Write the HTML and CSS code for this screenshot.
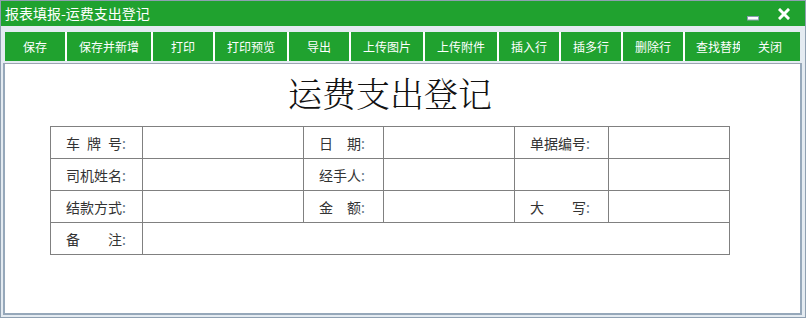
FILE: index.html
```html
<!DOCTYPE html>
<html lang="zh-CN">
<head>
    <meta charset="UTF-8">
    <title>报表填报-运费支出登记</title>
    <link rel="stylesheet" href="styles.css">
</head>
<body>
    <div class="window">
        <div class="titlebar">
            <span class="title">报表填报-运费支出登记</span>
            <span class="win-btns">
                <svg class="win-min" width="14" height="10" viewBox="0 0 14 10">
                    <rect x="1.5" y="5.5" width="11" height="3.5" fill="#fff" stroke="#8b9db0" stroke-width="1"/>
                </svg>
                <svg class="win-close" width="12" height="12" viewBox="0 0 12 12">
                    <path d="M2 2 L10 10 M10 2 L2 10" stroke="#fff" stroke-width="3" stroke-linecap="square"/>
                </svg>
            </span>
        </div>

        <div class="toolbar">
            <a class="tb-btn w60">保存</a>
            <a class="tb-btn w84">保存并新增</a>
            <a class="tb-btn w60">打印</a>
            <a class="tb-btn w72">打印预览</a>
            <a class="tb-btn w60">导出</a>
            <a class="tb-btn w72">上传图片</a>
            <a class="tb-btn w72">上传附件</a>
            <a class="tb-btn w60">插入行</a>
            <a class="tb-btn w60">插多行</a>
            <a class="tb-btn w60">删除行</a>
            <a class="tb-btn find">查找替换</a>
            <a class="tb-btn close">关闭</a>
        </div>

        <div class="content">
            <div class="sheet">
                <h1 class="sheet-title">运费支出登记</h1>
                <table class="form">
                    <colgroup>
                        <col style="width:92px"><col style="width:161px">
                        <col style="width:80px"><col style="width:131px">
                        <col style="width:94px"><col style="width:121px">
                    </colgroup>
                    <tr>
                        <td class="lbl"><span class="jt w4">车牌号</span>:</td><td></td>
                        <td class="lbl"><span class="jt w3">日期</span>:</td><td></td>
                        <td class="lbl"><span class="jt w4">单据编号</span>:</td><td></td>
                    </tr>
                    <tr>
                        <td class="lbl"><span class="jt w4">司机姓名</span>:</td><td></td>
                        <td class="lbl"><span class="jt w3">经手人</span>:</td><td></td>
                        <td></td><td></td>
                    </tr>
                    <tr>
                        <td class="lbl"><span class="jt w4">结款方式</span>:</td><td></td>
                        <td class="lbl"><span class="jt w3">金额</span>:</td><td></td>
                        <td class="lbl"><span class="jt w4">大写</span>:</td><td></td>
                    </tr>
                    <tr>
                        <td class="lbl"><span class="jt w4">备注</span>:</td><td colspan="5"></td>
                    </tr>
                </table>
            </div>
        </div>
    </div>
</body>
</html>
```

FILE: styles.css
```css
body {
    margin: 0;
    font-family: "Noto Sans CJK SC", "Noto Sans", sans-serif;
}
.window {
    width: 806px;
    height: 318px;
    box-sizing: border-box;
    border: 1px solid #8fa0b1;
    background: #e4ebf1;
    display: flex;
    flex-direction: column;
}
.titlebar {
    height: 25px;
    background: #20a22f;
    color: #fff;
    display: flex;
    align-items: center;
    justify-content: space-between;
    padding-left: 4px;
}
.title {
    font-size: 14px;
    line-height: 25px;
}
.win-btns {
    display: flex;
    align-items: center;
    gap: 18px;
    padding-right: 15px;
}
.win-min {
    margin-top: 4px;
}
.toolbar {
    display: flex;
    margin-top: 6px;
    padding-left: 4px;
    height: 29px;
}
.tb-btn {
    height: 29px;
    line-height: 29px;
    background: #20a22f;
    color: #fff;
    font-size: 12px;
    text-align: center;
    border-right: 2px solid #fff;
    white-space: nowrap;
    overflow: hidden;
    flex: none;
}
.w60 { width: 60px; }
.w72 { width: 72px; }
.w84 { width: 84px; }
.tb-btn.find {
    width: 70px;
    border-right: none;
}
.tb-btn.close {
    width: 60px;
    margin-left: -15px;
    border-right: none;
}
.content {
    flex: 1;
    margin: 2px 3px 2px 2px;
    background: #fff;
    border: 2px solid #96a8ba;
    border-top: 1px solid #9aa5b0;
}
.sheet {
    width: 680px;
    margin-left: 45px;
    padding-top: 9px;
}
.sheet-title {
    margin: 0 0 13px;
    height: 40px;
    line-height: 40px;
    text-align: center;
    font-size: 34px;
    font-weight: 300;
    color: #111;
    font-family: "Noto Serif CJK SC", "Noto Sans CJK SC", serif;
}
.form {
    border-collapse: collapse;
    table-layout: fixed;
    width: 680px;
}
.form td {
    border: 1px solid #808080;
    height: 31px;
    padding: 0;
    font-size: 14px;
    color: #333;
}
.form td.lbl {
    padding-left: 15px;
    color: #667788;
}
.jt {
    display: inline-block;
    text-align: justify;
    text-align-last: justify;
    color: #333;
}
.jt.w4 { width: 56px; }
.jt.w3 { width: 42px; }
```
